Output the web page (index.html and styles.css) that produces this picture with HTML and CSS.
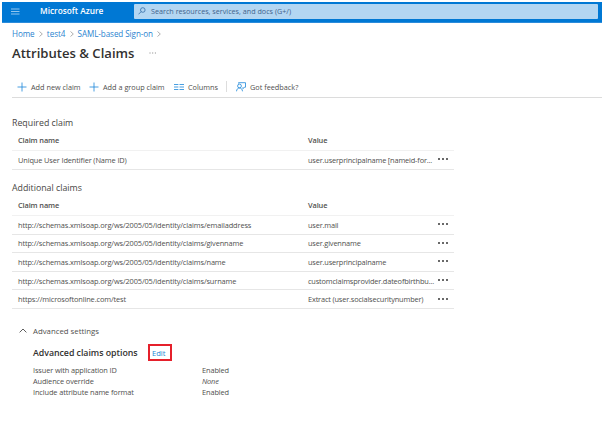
FILE: index.html
```html
<!DOCTYPE html>
<html lang="en">
<head>
<meta charset="utf-8">
<title>Attributes &amp; Claims - Microsoft Azure</title>
<link rel="stylesheet" href="styles.css">
</head>
<body>
<header class="topbar">
  <svg class="menu" viewBox="0 0 9 7"><path d="M0 1h8.500M0 3.500h8.500M0 6h8.500"/></svg>
  <span class="brand">Microsoft Azure</span>
  <div class="search">
    <svg class="lens" viewBox="0 0 8 8"><circle cx="4.800" cy="3" r="2.300"/><path d="M3.200 4.600L.5 7.300"/></svg>
    <span>Search resources, services, and docs (G+/)</span>
  </div>
</header>
<main>
  <nav class="crumbs">
    <a>Home</a><svg class="chev" viewBox="0 0 4 6"><path d="M.5.500L3.300 3 .5 5.500"/></svg>
    <a>test4</a><svg class="chev" viewBox="0 0 4 6"><path d="M.5.500L3.300 3 .5 5.500"/></svg>
    <a>SAML-based Sign-on</a><svg class="chev" viewBox="0 0 4 6"><path d="M.5.500L3.300 3 .5 5.500"/></svg>
  </nav>
  <div class="title"><h1>Attributes &amp; Claims</h1><svg class="title-more" viewBox="0 0 8 2"><path d="M.5 1h1M3.200 1h1M5.900 1h1"/></svg></div>
  <div class="toolbar">
    <button class="add"><svg class="plus" viewBox="0 0 10 10"><path d="M5 .5v9M.5 5h9"/></svg><span>Add new claim</span></button>
    <button class="group"><svg class="plus" viewBox="0 0 10 10"><path d="M5 .5v9M.5 5h9"/></svg><span>Add a group claim</span></button>
    <button class="columns"><svg class="cols" viewBox="0 0 10 7"><path d="M0 1h4.400M5.500 1H10M0 3.500h4.400M5.500 3.500H10M0 6h4.400M5.500 6H10"/></svg><span>Columns</span></button>
    <i class="divider"></i>
    <button class="feedback"><svg class="person" viewBox="0 0 10 10"><circle cx="3.500" cy="4" r="1.900"/><path d="M.5 9.300C.7 7 2 6 3.500 6s2.800 1 3 3.300M2.500 1.500V.7h7v4.500H8.500L7 6.700V5.200"/></svg><span>Got feedback?</span></button>
  </div>

  <h2 class="required">Required claim</h2>
  <section class="table">
    <div class="row head"><b>Claim name</b><b>Value</b></div>
    <div class="row"><span>Unique User Identifier (Name ID)</span><span class="value">user.userprincipalname [nameid-for...</span><i class="dots"></i></div>
  </section>

  <h2 class="additional">Additional claims</h2>
  <section class="table">
    <div class="row head"><b>Claim name</b><b>Value</b></div>
    <div class="row"><span>http://schemas.xmlsoap.org/ws/2005/05/identity/claims/emailaddress</span><span class="value">user.mail</span><i class="dots"></i></div>
    <div class="row"><span>http://schemas.xmlsoap.org/ws/2005/05/identity/claims/givenname</span><span class="value">user.givenname</span><i class="dots"></i></div>
    <div class="row"><span>http://schemas.xmlsoap.org/ws/2005/05/identity/claims/name</span><span class="value">user.userprincipalname</span><i class="dots"></i></div>
    <div class="row"><span>http://schemas.xmlsoap.org/ws/2005/05/identity/claims/surname</span><span class="value">customclaimsprovider.dateofbirthbu...</span><i class="dots"></i></div>
    <div class="row"><span>https://microsoftonline.com/test</span><span class="value">Extract (user.socialsecuritynumber)</span><i class="dots"></i></div>
  </section>

  <section class="advanced">
    <div class="toggle"><svg class="caret" viewBox="0 0 8 5"><path d="M.6 4.400L4 1l3.400 3.400"/></svg><span>Advanced settings</span></div>
    <div class="options"><h3>Advanced claims options</h3><a class="edit">Edit</a></div>
    <dl>
      <dt>Issuer with application ID</dt><dd>Enabled</dd>
      <dt>Audience override</dt><dd class="none">None</dd>
      <dt>Include attribute name format</dt><dd>Enabled</dd>
    </dl>
  </section>
</main>
</body>
</html>
```
FILE: styles.css
```css
* { box-sizing: border-box; }
body { margin: 0; padding: 2px 2px 0; width: 604px; height: 439px; overflow: hidden; background: #fff; color: #504f4e; font: 7.4px/10px "Open Sans", "Noto Sans", sans-serif; letter-spacing: -.12px; white-space: nowrap; }
svg { display: block; flex: none; fill: none; stroke: #1a86d9; stroke-width: .8; }
h1, h2, h3, dl, dd { margin: 0; }
h1, h2, h3 { font-weight: 400; letter-spacing: 0; }

.topbar { display: flex; align-items: center; height: 21px; padding: 0 4px 2px 9px; background: #0078d4; border-bottom: 1px solid #2b8cdb; }
.menu { width: 9px; height: 7px; stroke: #b5d8f5; }
.brand { width: 94px; margin-left: 20px; color: #fff; font-size: 8.3px; font-weight: 600; letter-spacing: 0; }
.search { display: flex; align-items: center; gap: 5px; width: 464px; height: 15px; padding-left: 4px; border-radius: 1px; background: #b3d6f2; color: #3f638c; font-size: 7.2px; letter-spacing: 0; }
.lens { width: 8px; height: 8px; stroke: #326ca6; }

main { padding-left: 10px; }
.crumbs { display: flex; align-items: center; height: 12px; margin-top: 5px; color: #2b83cf; font-size: 8.1px; letter-spacing: -.08px; }
.chev { width: 4px; height: 6px; margin: 0 4px 0 4.300px; stroke: #777; stroke-width: .6; }
.title { display: flex; align-items: center; height: 20px; margin-top: 3px; }
h1 { width: 137px; color: #323130; font-size: 13.1px; font-weight: 600; line-height: 20px; }
.title-more { width: 8px; height: 2px; stroke: #666; }

.toolbar { display: flex; align-items: center; height: 22px; margin-top: 13px; padding-left: 5px; border-bottom: 1px solid #dcdcdc; }
button { display: flex; align-items: center; gap: 4px; padding: 0; border: 0; background: none; color: inherit; font: 7.300px/10px "Open Sans", "Noto Sans", sans-serif; letter-spacing: 0; }
.add { width: 72px; }
.group { width: 85px; }
.columns { width: 52px; }
.plus, .cols, .person { width: 10px; height: 10px; }
.divider { width: 1px; height: 11px; margin-right: 9px; background: #ddd; }

h2 { height: 14px; color: #484644; font-size: 8.8px; line-height: 14px; }
.required { margin-top: 18px; }
.additional { margin-top: 11.400px; }
.table { width: 442px; }
.row { display: grid; grid-template-columns: 290px 130px 12px; align-items: center; height: 18.600px; padding: 0 0 0 6px; border-bottom: 1px solid #e6e6e6; }
.row.head { height: 21px; border-color: #f1f1f1; }
.row b { font-weight: 600; }
.value { letter-spacing: -.17px; }
.dots { width: 11px; height: 2px; margin-top: -1px; background: radial-gradient(circle at 1px 1px, #666 .7px, transparent 1.100px) 0 0 / 4px 2px; }

.advanced { padding: 16px 0 0 7px; }
.toggle { display: flex; align-items: center; gap: 6px; height: 12px; font-size: 7.8px; letter-spacing: 0; }
.caret { width: 8px; height: 5px; stroke: #333; }
.options { display: flex; align-items: center; height: 17px; margin: 7px 0 4px 14px; }
h3 { width: 115px; padding-top: 2px; color: #323130; font-size: 8.8px; font-weight: 600; letter-spacing: -.03px; }
.edit { width: 24px; height: 17px; padding-left: 2px; border: 2px solid #e5202b; color: #2084d4; font-size: 7.6px; letter-spacing: 0; line-height: 14px; }
dl { display: grid; grid-template-columns: 169px auto; grid-auto-rows: 11.200px; margin-left: 14px; line-height: 11.200px; }
.none { font-style: italic; }
```
